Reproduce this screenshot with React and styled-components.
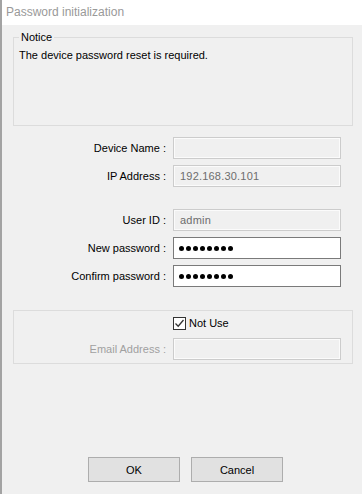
import React from "react";
import styled, { createGlobalStyle } from "styled-components";

const GlobalStyle = createGlobalStyle`
    html, body {
        margin: 0;
        padding: 0;
        background: #f0f0f0;
    }
    * {
        box-sizing: border-box;
    }
`;

const Window = styled.div`
    width: 362px;
    height: 494px;
    display: flex;
    flex-direction: column;
    background: #f0f0f0;
    border-left: 2px solid #a3a3a3;
    font-family: "Liberation Sans", Arial, sans-serif;
    font-size: 11px;
    color: #000;
    overflow: hidden;
`;
const TitleBar = styled.div`
    height: 25px;
    flex: none;
    background: #fff;
    padding-left: 4px;
    display: flex;
    align-items: center;
    padding-bottom: 2px;
    font-size: 12px;
    color: #999;
`;
const Body = styled.div`
    flex: 1;
    display: flex;
    flex-direction: column;
    padding: 6px 9px 12px 11px;
`;
const Group = styled.fieldset`
    margin: 0;
    padding: 0;
    border: 1px solid #dcdcdc;
    height: ${(p) => p.$h}px;
    min-width: 0;
`;
const Legend = styled.legend`
    margin-left: 5px;
    padding: 0 2px;
    line-height: 12px;
`;
const NoticeText = styled.div`
    padding: 6px 0 0 5px;
`;
const Form = styled.div`
    margin-top: 11px;
    display: grid;
    grid-template-columns: 154px 168px;
    column-gap: 6px;
    row-gap: 6px;
`;
const Spacer = styled.div`
    grid-column: 1 / 3;
    height: 10px;
`;
const Label = styled.div`
    height: 22px;
    display: flex;
    align-items: center;
    justify-content: flex-end;
    padding-right: 1px;
    color: ${(p) => (p.$disabled ? "#a0a0a0" : "#000")};
`;
const Field = styled.div`
    height: 22px;
    display: flex;
    align-items: center;
    padding-left: ${(p) => (p.$active ? 5 : 6)}px;
    background: ${(p) => (p.$active ? "#fff" : "#f0f0f0")};
    border: 1px solid ${(p) => (p.$active ? "#7a7a7a" : "#cccccc")};
    box-shadow: ${(p) => (p.$active ? "none" : "inset 0 0 0 1px #fbfbfb")};
    color: #6d6d6d;
    font-size: 11px;
    letter-spacing: 0.2px;
`;
const Dots = styled.div`
    display: flex;
    gap: 2px;
`;
const Dot = styled.span`
    width: 5px;
    height: 5px;
    border-radius: 50%;
    background: #000;
`;
const EmailGroup = styled.div`
    margin-top: 23px;
    height: 54px;
    border: 1px solid #dcdcdc;
    display: grid;
    grid-template-columns: 153px 168px;
    column-gap: 6px;
    row-gap: 5px;
    padding-top: 5px;
`;
const CheckRow = styled.label`
    grid-column: 2;
    display: flex;
    align-items: center;
    height: 14px;
    gap: 3px;
`;
const Box = styled.span`
    width: 13px;
    height: 13px;
    border: 1px solid #333;
    background: #fff;
    display: flex;
    align-items: center;
    justify-content: center;
`;
const Buttons = styled.div`
    margin-top: auto;
    display: flex;
    justify-content: center;
    gap: 11px;
    padding-left: 5px;
`;
const Button = styled.button`
    width: 92px;
    height: 25px;
    background: #e1e1e1;
    border: 1px solid #adadad;
    font-family: inherit;
    font-size: 11px;
    color: #000;
    padding: 0;
`;

const Password = () => (
    <Dots>
        {Array.from({ length: 8 }).map((_, i) => (
            <Dot key={i} />
        ))}
    </Dots>
);

function App() {
    return (
        <Window>
            <GlobalStyle />
            <TitleBar>Password initialization</TitleBar>
            <Body>
                <Group $h={95}>
                    <Legend>Notice</Legend>
                    <NoticeText>The device password reset is required.</NoticeText>
                </Group>
                <Form>
                    <Label>Device Name :</Label>
                    <Field />
                    <Label>IP Address :</Label>
                    <Field>192.168.30.101</Field>
                    <Spacer />
                    <Label>User ID :</Label>
                    <Field>admin</Field>
                    <Label>New password :</Label>
                    <Field $active><Password /></Field>
                    <Label>Confirm password :</Label>
                    <Field $active><Password /></Field>
                </Form>
                <EmailGroup>
                    <CheckRow>
                        <Box>
                            <svg width="11" height="11" viewBox="0 0 11 11">
                                <path d="M1.5 5.5 L4.2 8.2 L9.5 2" fill="none" stroke="#333" strokeWidth="1.3" />
                            </svg>
                        </Box>
                        Not Use
                    </CheckRow>
                    <Label $disabled>Email Address :</Label>
                    <Field />
                </EmailGroup>
                <Buttons>
                    <Button>OK</Button>
                    <Button>Cancel</Button>
                </Buttons>
            </Body>
        </Window>
    );
}

export default App;
